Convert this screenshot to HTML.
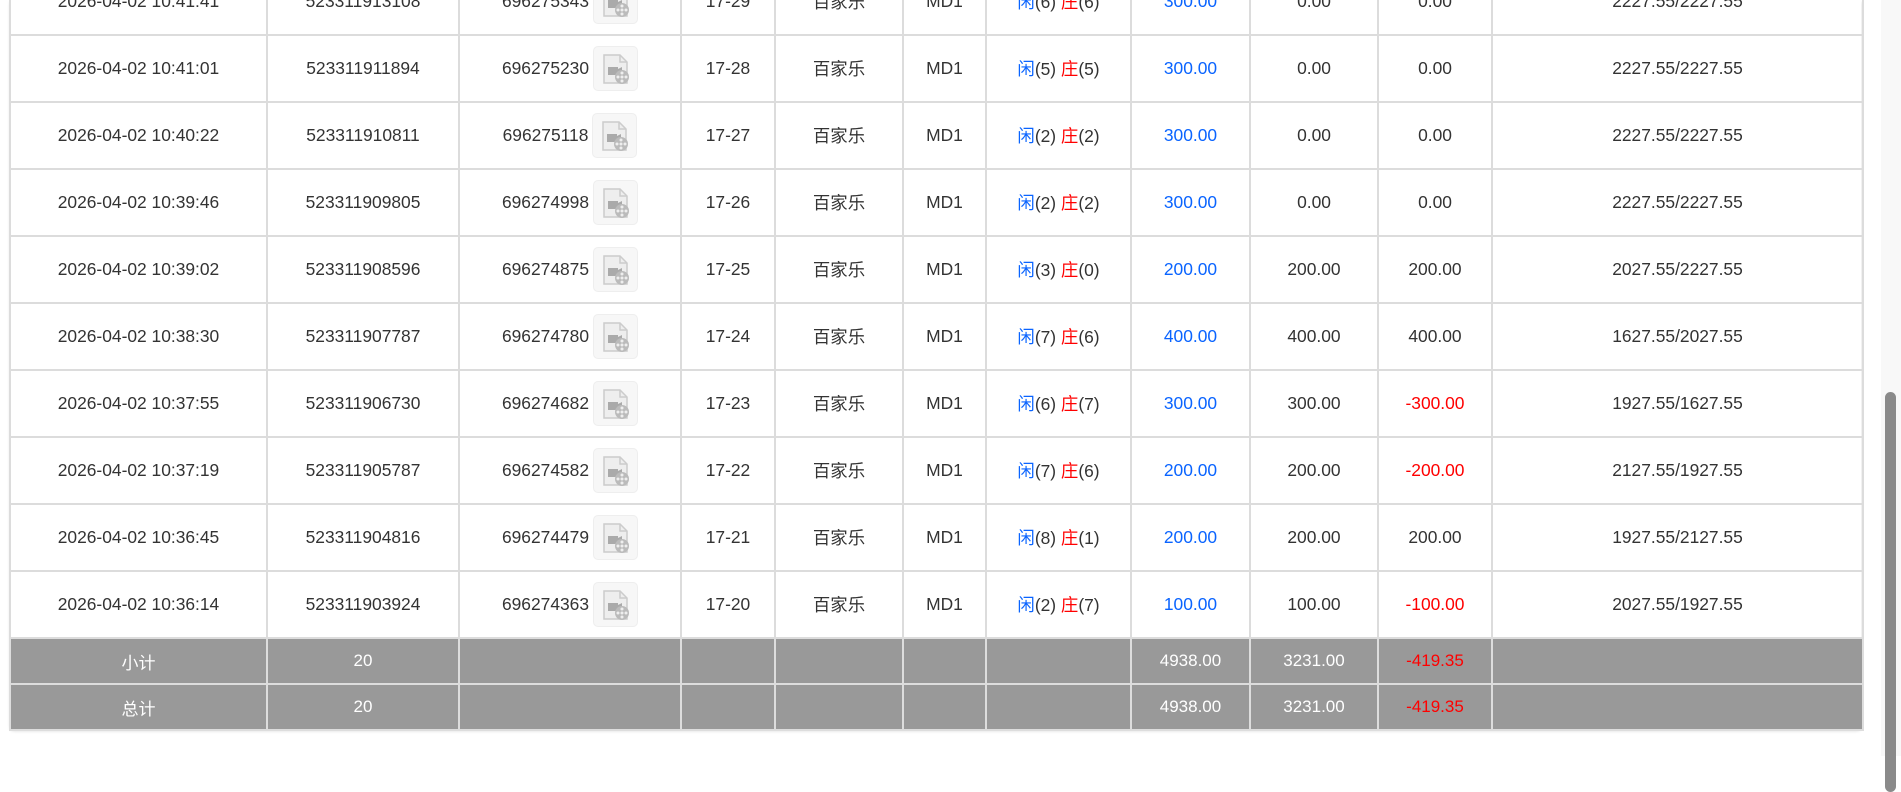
<!DOCTYPE html>
<html><head><meta charset="utf-8"><style>
html,body{margin:0;padding:0;width:1901px;height:756px;overflow:hidden;background:#fff;font-family:"Liberation Sans","Noto Sans CJK SC",sans-serif;}
table{position:absolute;left:9px;top:-33px;border-collapse:collapse;table-layout:fixed;width:1853px;font-size:17.4px;color:#333;}
td{border:2px solid #dcdcdc;text-align:center;height:65px;padding:0;white-space:nowrap;vertical-align:middle;}
tr.s td{background:#999;color:#fff;height:44px;border-color:#ddd;font-size:17px;}
.b{color:#0a64ff}.r{color:#f00}
.ord{display:inline-flex;align-items:center;}
.ic{display:inline-block;width:43px;height:43px;border:1px solid #eee;border-radius:5px;background:#f7f7f7;margin-left:4px;}
.ic svg{display:block}
.sb{position:absolute;left:1881px;top:0;width:20px;height:756px;background:#f8f8f8;}
.th{position:absolute;left:1885px;top:392px;width:11px;height:400px;border-radius:6px;background:#8a8a8a;}
.wrap{position:absolute;left:10px;top:0;width:1851px;height:729px;box-shadow:0 2px 3px rgba(0,0,0,.15);border-radius:0 0 4px 4px;}
</style></head><body>
<div class="wrap"></div>
<table>
<colgroup><col style="width:257px"><col style="width:192px"><col style="width:222px"><col style="width:94px"><col style="width:128px"><col style="width:83px"><col style="width:145px"><col style="width:119px"><col style="width:128px"><col style="width:114px"><col style="width:371px"></colgroup>
<tbody id="tb"></tbody>
</table>
<div class="sb"></div><div class="th"></div>
<script>
var icon='<span class="ic"><svg width="43" height="43" viewBox="0 0 43 43"><path d="M10 8h16l7 7v21H10z" fill="#eee" stroke="#ccc" stroke-width="1.5"/><path d="M26 8v7h7" fill="none" stroke="#ccc" stroke-width="1.5"/><rect x="14" y="20" width="10" height="8" fill="#aaa"/><path d="M24 22l4-2v8l-4-2z" fill="#aaa"/><circle cx="28" cy="30" r="7" fill="#bbb"/><circle cx="28" cy="30" r="1.5" fill="#eee"/><circle cx="28" cy="26" r="1.5" fill="#eee"/><circle cx="28" cy="34" r="1.5" fill="#eee"/><circle cx="24" cy="30" r="1.5" fill="#eee"/><circle cx="32" cy="30" r="1.5" fill="#eee"/></svg></span>';
var rows=[
["2026-04-02 10:41:41","523311913108","696275343","17-29","6","6","300.00","0.00","0.00","2227.55/2227.55"],
["2026-04-02 10:41:01","523311911894","696275230","17-28","5","5","300.00","0.00","0.00","2227.55/2227.55"],
["2026-04-02 10:40:22","523311910811","696275118","17-27","2","2","300.00","0.00","0.00","2227.55/2227.55"],
["2026-04-02 10:39:46","523311909805","696274998","17-26","2","2","300.00","0.00","0.00","2227.55/2227.55"],
["2026-04-02 10:39:02","523311908596","696274875","17-25","3","0","200.00","200.00","200.00","2027.55/2227.55"],
["2026-04-02 10:38:30","523311907787","696274780","17-24","7","6","400.00","400.00","400.00","1627.55/2027.55"],
["2026-04-02 10:37:55","523311906730","696274682","17-23","6","7","300.00","300.00","-300.00","1927.55/1627.55"],
["2026-04-02 10:37:19","523311905787","696274582","17-22","7","6","200.00","200.00","-200.00","2127.55/1927.55"],
["2026-04-02 10:36:45","523311904816","696274479","17-21","8","1","200.00","200.00","200.00","1927.55/2127.55"],
["2026-04-02 10:36:14","523311903924","696274363","17-20","2","7","100.00","100.00","-100.00","2027.55/1927.55"]];
var h='';
rows.forEach(function(r){h+='<tr><td>'+r[0]+'</td><td>'+r[1]+'</td><td><span class="ord">'+r[2]+icon+'</span></td><td>'+r[3]+'</td><td>百家乐</td><td>MD1</td><td><span class="b">闲</span>('+r[4]+') <span class="r">庄</span>('+r[5]+')</td><td class="b">'+r[6]+'</td><td>'+r[7]+'</td><td'+(r[8][0]=='-'?' class="r"':'')+'>'+r[8]+'</td><td>'+r[9]+'</td></tr>';});
['小计','总计'].forEach(function(n){h+='<tr class="s"><td>'+n+'</td><td>20</td><td></td><td></td><td></td><td></td><td></td><td>4938.00</td><td>3231.00</td><td style="color:#f00">-419.35</td><td></td></tr>';});
document.getElementById('tb').innerHTML=h;
</script>
</body></html>
